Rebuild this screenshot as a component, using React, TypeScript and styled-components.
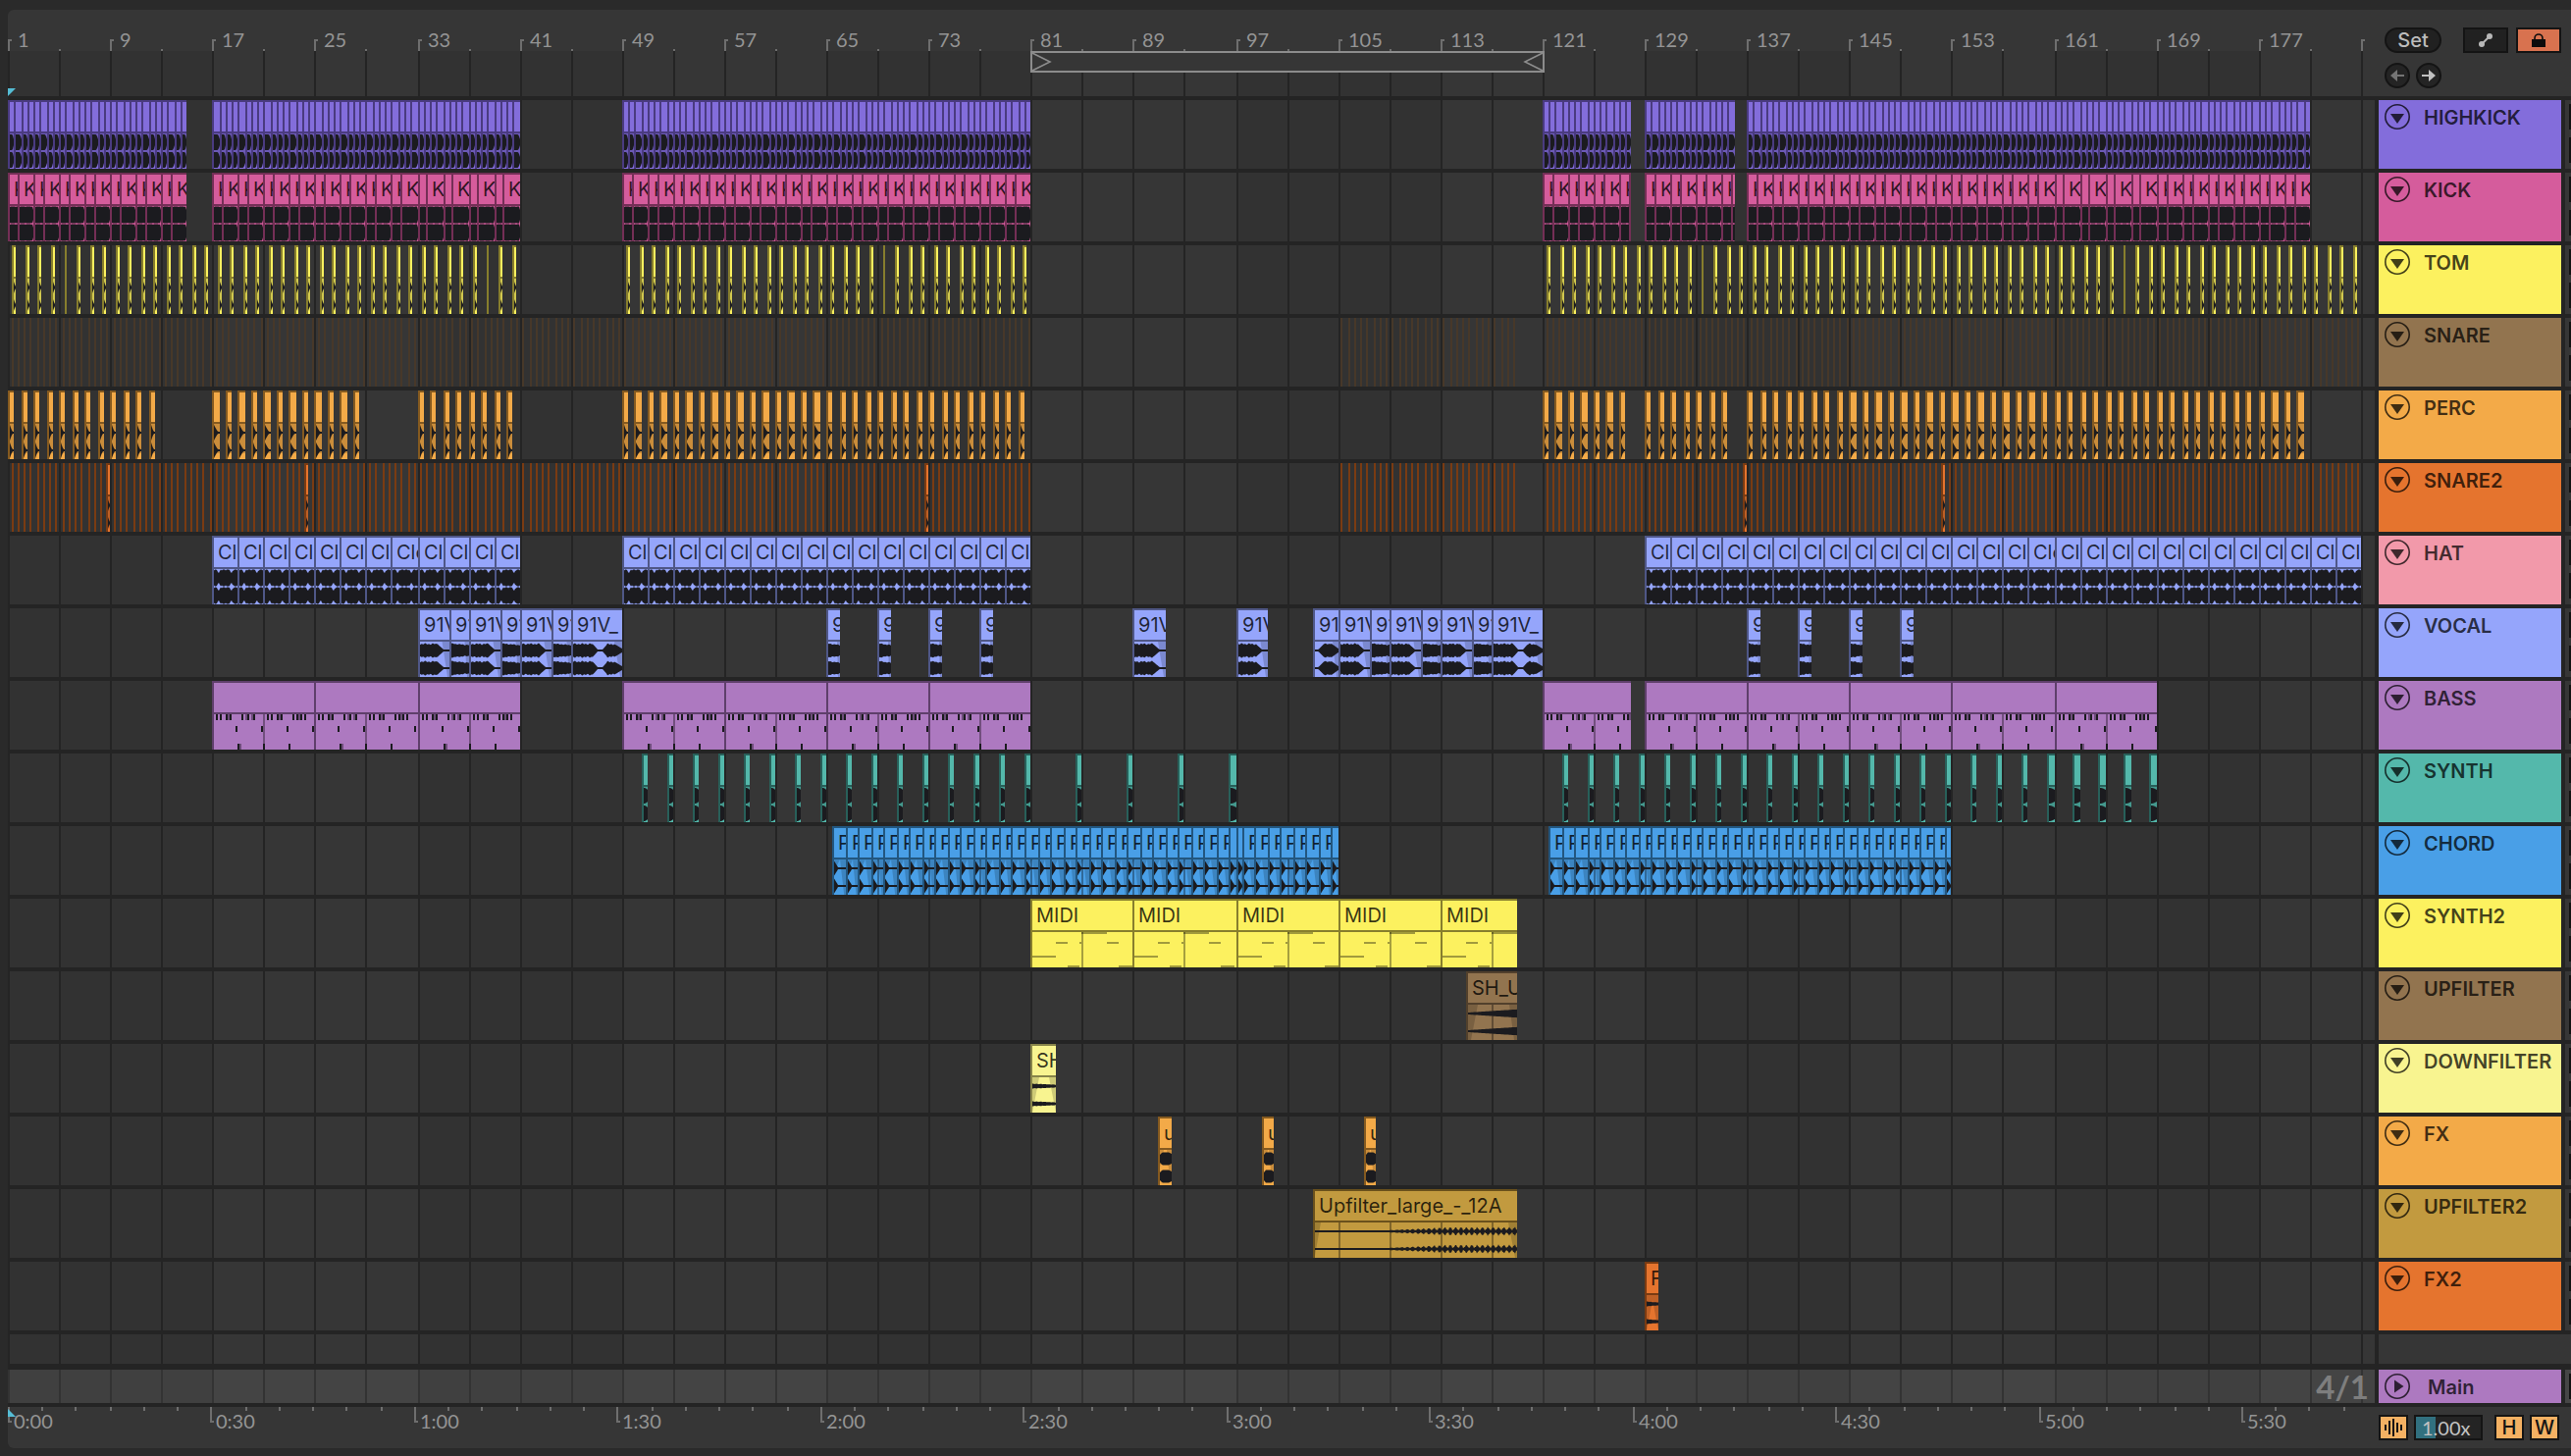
import React from "react";
import styled, { createGlobalStyle } from "styled-components";

/* ---------- time scale ---------- */

const UNITS_PER_BAR = 6.51565;
const barX = (bar: number) => 2 * Math.round(bar * UNITS_PER_BAR);
const secX = (sec: number) => 2 * Math.round(sec * 3.4485);
const LAST_BAR = 184;

/* ---------- palette ---------- */

const ink = "#1b1b1f";
const purple = { fill: "#836ddb", edge: "#4a3b80" };
const pink = { fill: "#d55c9c", edge: "#742f56" };
const yellow = { fill: "#fcf15f", edge: "#877e2d" };
const brown = { fill: "#92744f", edge: "#52402c" };
const umber = { fill: "#473829", edge: "#473829" };
const amber = { fill: "#f3aa48", edge: "#855a20" };
const orange = { fill: "#e5742e", edge: "#7a3b12" };
const blue = { fill: "#95a5fb", edge: "#4f5787" };
const violet = { fill: "#ad79c0", edge: "#5f3f6b" };
const teal = { fill: "#54b8ab", edge: "#28605a" };
const sky = { fill: "#499fe7", edge: "#22567f" };
const cream = { fill: "#f8f490", edge: "#87844a" };
const gold = { fill: "#c29a3f", edge: "#6a511c" };
const rose = { fill: "#f299aa", edge: "#85505b" };

type Paint = { fill: string; edge: string };
type Kind =
  | "highkick" | "kick" | "tom" | "perc" | "hat" | "vocal" | "bass"
  | "synth" | "chord" | "midi" | "rise" | "flat" | "burst" | "noise";
type ClipData = { from: number; to: number; label?: string };
type Track = { name: string; paint: Paint; clipPaint?: Paint; kind: Kind; clips: ClipData[] };

/* ---------- arrangement ---------- */

const range = (from: number, to: number, step: number) => {
  const out: number[] = [];
  for (let b = from; b < to; b += step) out.push(b);
  return out;
};

const tile = (from: number, to: number, step: number, label?: string): ClipData[] =>
  range(from, to, step).map((b) => ({ from: b, to: Math.min(b + step, to), label }));

const kicks = (from: number, to: number, split = 0.75): ClipData[] =>
  range(from, to, 2).flatMap((b) => [
    { from: b, to: Math.min(b + split, to), label: "K" },
    ...(b + split < to ? [{ from: b + split, to: Math.min(b + 2, to), label: "K" }] : []),
  ]);

const hits = (from: number, to: number, step: number, offset: number, length: number): ClipData[] =>
  range(from, to, step).map((b) => ({ from: b + offset, to: b + offset + length }));

const chain = (edges: number[], label: string): ClipData[] =>
  edges.slice(0, -1).map((b, i) => ({ from: b, to: edges[i + 1], label }));

const chords = [64.5, ...range(65.5, 96, 1), 96, ...range(96.5, 104, 1), 104];

const tracks: Track[] = [
  {
    name: "HIGHKICK", paint: purple, kind: "highkick",
    clips: [[0, 14], [16, 40], [48, 80], [120, 127], [128, 135], [136, 180]].flatMap(([a, b]) => tile(a, b, 0.5)),
  },
  {
    name: "KICK", paint: pink, kind: "kick",
    clips: [
      ...kicks(0, 14), ...kicks(16, 32), ...kicks(32, 40, 0.625), ...kicks(48, 80),
      ...kicks(120, 126.875), ...kicks(128, 135), ...kicks(136, 160),
      ...kicks(160, 168, 0.625), ...kicks(168, 180),
    ],
  },
  {
    name: "TOM", paint: yellow, kind: "tom",
    clips: [[0, 40], [48, 80], [120, 184]].flatMap(([a, b]) => hits(a, b, 1, 0.375, 0.302)),
  },
  {
    name: "SNARE", paint: brown, clipPaint: umber, kind: "tom",
    clips: [[0, 80], [104, 118], [120, 184]].flatMap(([a, b]) => hits(a, b, 0.5, 0.25, 0.1535)),
  },
  {
    name: "PERC", paint: amber, kind: "perc",
    clips: [[0, 12], [16, 28], [32, 40], [48, 80], [120, 127], [128, 135], [136, 180]]
      .flatMap(([a, b]) => hits(a, b, 1, 0, 0.5)),
  },
  {
    name: "SNARE2", paint: orange, kind: "tom",
    clips: [[0, 80], [104, 118], [120, 184]].flatMap(([a, b]) => hits(a, b, 0.5, 0.25, 0.1553)),
  },
  {
    name: "HAT", paint: rose, clipPaint: blue, kind: "hat",
    clips: [[16, 40], [48, 80], [128, 184]].flatMap(([a, b]) => tile(a, b, 2, "Clo")),
  },
  {
    name: "VOCAL", paint: blue, kind: "vocal",
    clips: [
      ...chain([32, 34.5, 36, 38.5, 40, 42.5, 44, 48], "91V_"),
      ...[64, 68, 72, 76, 136, 140, 144, 148].map((b) => ({ from: b, to: b + 1, label: "91V_" })),
      { from: 88, to: 90.5, label: "91V_" },
      { from: 96, to: 98.5, label: "91V_" },
      ...chain([102, 104, 106.5, 108, 110.5, 112, 114.5, 116, 120], "91V_"),
    ],
  },
  {
    name: "BASS", paint: violet, kind: "bass",
    clips: [[16, 40], [48, 80], [120, 127], [128, 168]].flatMap(([a, b]) => tile(a, b, 8)),
  },
  {
    name: "SYNTH", paint: teal, kind: "synth",
    clips: [...hits(48, 80, 2, 1.5, 0.5), ...hits(80, 96, 4, 3.5, 0.5), ...hits(120, 168, 2, 1.5, 0.5)],
  },
  {
    name: "CHORD", paint: sky, kind: "chord",
    clips: [...chain(chords, "P"), ...tile(120.5, 152, 1, "P")],
  },
  { name: "SYNTH2", paint: yellow, kind: "midi", clips: tile(80, 118, 8, "MIDI") },
  { name: "UPFILTER", paint: brown, kind: "rise", clips: [{ from: 114, to: 118, label: "SH_U" }] },
  { name: "DOWNFILTER", paint: cream, kind: "flat", clips: [{ from: 80, to: 82, label: "SH" }] },
  {
    name: "FX", paint: amber, kind: "burst",
    clips: [90, 98, 106].map((b) => ({ from: b, to: b + 1, label: "u" })),
  },
  { name: "UPFILTER2", paint: gold, kind: "noise", clips: [{ from: 102, to: 118, label: "Upfilter_large_-_12A" }] },
  { name: "FX2", paint: orange, kind: "flat", clips: [{ from: 128, to: 129, label: "F" }] },
];

/* ---------- clip contents ---------- */

const wobble = (x: number, seed: number) =>
  Math.sin(x * 1.7 + seed * 3.1) * 0.6 + Math.sin(x * 0.73 + seed * 1.3) * 0.4;

function level(kind: Kind, x: number, w: number, seed: number): number {
  const t = x / w;
  switch (kind) {
    case "highkick":
      return t < 0.55 ? 8 : 8 - 5 * Math.pow((t - 0.55) / 0.45, 2);
    case "kick":
      return t > 0.94 && w > 12 ? 5 : x % 6 < 1 ? 8 : 8.6;
    case "tom":
      return [6, 3, 1][Math.min(2, Math.floor(x))];
    case "perc":
      return Math.max(1, 8 * Math.pow(1 - t, 1.5) - 0.5 * t);
    case "hat": {
      const near = Math.min(Math.abs(t - 0.2), Math.abs(t - 0.74)) * w;
      return near < 2 ? 4.5 + near * 2 : x % 4 < 1 ? 7.6 : 8.5;
    }
    case "vocal": {
      const n = wobble(x, seed);
      if (w > 40) {
        if (t < 0.4) return 6.6 + n;
        if (t < 0.5) return 6.6 - (t - 0.4) * 55;
        if (t < 0.6) return 1;
        if (t < 0.7) return 1 + (t - 0.6) * 55;
        return t < 0.85 ? 6.4 + n : 6.4 - (t - 0.85) * 30;
      }
      if (seed === 102) return t < 0.15 ? 1 : t < 0.4 ? 1 + (t - 0.15) * 24 : t < 0.7 ? 6.8 + n * 0.6 : 7 - (t - 0.7) * 17;
      if (w > 21) return t < 0.6 ? 6.6 + n : t < 0.8 ? 6.4 - (t - 0.6) * 27 : 1;
      return 7 + n * 0.6 - t * 1.5;
    }
    case "synth":
      return 8 - 2 * t * t;
    case "chord":
      return Math.max(1, 7.5 - x * 1.6);
    case "rise":
      return 1 + 3.2 * t;
    case "flat":
      return 2.4 - t + wobble(x * 2, 1) * 0.4;
    case "burst":
      return t < 0.2 ? 4 + t * 12 : t > 0.75 ? 6.5 - (t - 0.75) * 6 : 6.5;
    case "noise": {
      const rise = Math.min(1, Math.max(0, (t - 0.35) / 0.3));
      return 1 + rise * (1.6 + 1.5 * Math.sin(x * 1.15) + 0.7 * Math.sin(x * 2.9));
    }
    default:
      return 0;
  }
}

function channel(kind: Kind, w: number, mid: number, seed: number): string {
  const top: string[] = [];
  const bottom: string[] = [];
  for (let x = 0; x <= w; x += 1) {
    const h = Math.min(8.6, Math.max(0.8, level(kind, x, w, seed)));
    top.push(`${x} ${(mid - h).toFixed(1)}`);
    bottom.unshift(`${x} ${(mid + h).toFixed(1)}`);
  }
  return `M${top.join("L")}L${bottom.join("L")}Z`;
}

const shades: Partial<Record<Kind, (w: number) => string>> = {
  highkick: (w) => `M0 0H${w}V30L0 20Z`,
  tom: (w) => `M0 0H${w}V34L0 24Z`,
  perc: (w) => `M0 0H${w}V30L0 30Z`,
  synth: (w) => `M0 0H${w}V30H0Z`,
  vocal: (w) => `M${Math.max(w - 8, w * 0.75)} 0H${w}V36H${w - 2}Z`,
  chord: (w) => `M0 0H${w}V36H${w * 0.85}L${w * 0.5} 0L2 8Z`,
  rise: (w) => `M0 0H10L3 36H0ZM${w - 8} 0H${w}V36H${w - 3}Z`,
  flat: (w) => `M0 0H7L2 26L0 36ZM${w - 7} 0H${w}V36Z`,
  burst: (w) => `M0 0H4L0 18ZM${w - 5} 0H${w}V30H${w - 2}Z`,
  noise: (w) => `M0 0H6L0 34ZM${w - 9} 0H${w}V36H${w - 2}Z`,
};

type Note = [x: number, y: number, w: number, h: number, dim?: boolean];

const bassPhrase: Note[] = [
  ...[4, 8, 14, 18, 30, 36, 42].map((x): Note => [x, 0, 2, 6]),
  ...[16, 34, 40].map((x): Note => [x, 0, 2, 6, true]),
  [24, 12, 2, 6], [50, 12, 2, 6], [26, 30, 2, 6], [0, 30, 2, 6], [28, 30, 2, 6, true],
];
const bassAnswer: Note[] = [
  ...[4, 8, 14, 18, 30, 34, 38, 42].map((x): Note => [x, 0, 2, 6]),
  ...[16, 36].map((x): Note => [x, 0, 2, 6, true]),
  [24, 12, 2, 6], [50, 12, 2, 6], [26, 30, 2, 6], [0, 30, 2, 6],
];
const midiPhrase: Note[] = [
  [0, 24, 24, 2, true], [24, 10, 12, 2, true], [48, 10, 2, 2, true], [36, 34, 12, 2, true],
  [50, 0, 26, 2, true], [76, 10, 12, 2, true], [88, 34, 14, 2, true],
];

function notesFor(clip: ClipData, kind: Kind): Note[] {
  if (kind === "midi") return midiPhrase;
  if (kind !== "bass") return [];
  return range(clip.from, clip.to, 4).flatMap((b, i) => {
    const dx = barX(b) - barX(clip.from) - 2;
    return (i % 2 ? bassAnswer : bassPhrase).map(([x, y, w, h, dim]): Note => [x + dx, y, w, h, dim]);
  });
}

function ClipDrawing({ clip, kind, width }: { clip: ClipData; kind: Kind; width: number }) {
  const shade = shades[kind];
  const lines = range(Math.ceil((clip.from + 0.1) / 4) * 4, clip.to - 0.1, 4)
    .map((b) => barX(b) - barX(clip.from) - 2);
  const isMidi = kind === "bass" || kind === "midi";
  return (
    <Drawing width={width} height={36} viewBox={`0 0 ${width} 36`} aria-hidden="true">
      {shade && <path d={shade(width)} fill="rgba(0,0,0,0.17)" />}
      {lines.map((x) => <rect key={x} x={x} y={0} width={2} height={36} fill="rgba(0,0,0,0.34)" />)}
      {isMidi
        ? notesFor(clip, kind).map(([x, y, w, h, dim], i) => (
            <rect key={i} x={x} y={y} width={w} height={h} fill={dim ? "rgba(0,0,0,0.36)" : ink} />
          ))
        : <path d={channel(kind, width, 9, clip.from) + channel(kind, width, 27, clip.from)} fill={ink} />}
    </Drawing>
  );
}

/* ---------- styles ---------- */

const Global = createGlobalStyle`
  *, *::before, *::after { box-sizing: border-box; }
  body {
    margin: 0;
    background: #2a2a2a;
    font-family: Inter, "Liberation Sans", sans-serif;
    font-size: 20px;
    line-height: 24px;
  }
  button, input { font: inherit; margin: 0; padding: 0; }
`;

const Page = styled.main`
  padding: 10px 0 8px 8px;
`;

const Frame = styled.div`
  border-radius: 6px 0 0 6px;
  background: #363636;
  overflow: hidden;
`;

const Row = styled.div`
  display: flex;
`;

const TimeColumn = styled.div`
  position: relative;
  flex: 1;
  min-width: 0;
  overflow: hidden;
`;

const SideColumn = styled.div`
  flex: none;
  width: 200px;
`;

const Ruler = styled.div`
  position: relative;
  height: 42px;
  font-family: Lato, "Liberation Sans", sans-serif;
  color: #949494;
`;

const BarMark = styled.span<{ $major?: boolean }>`
  position: absolute;
  bottom: 0;
  height: ${(p) => (p.$major ? 12 : 2)}px;
  border-left: 2px solid #6e6e6e;

  &::after {
    content: "";
    display: ${(p) => (p.$major ? "block" : "none")};
    width: 2px;
    height: 2px;
    background: #6e6e6e;
  }
`;

const BarLabel = styled.span`
  position: absolute;
  top: 18px;
  padding-left: 10px;
`;

const Scrub = styled.div`
  position: relative;
  height: 46px;
`;

const Loop = styled.div`
  position: absolute;
  top: 0;
  display: flex;
  justify-content: space-between;
  height: 22px;
  border: 2px solid #8c8c8c;
  background: #363636;
`;

const Playhead = styled.svg<{ $edge: "top" | "bottom" }>`
  position: absolute;
  left: 0;
  ${(p) => (p.$edge === "bottom" ? "bottom: 0;" : "top: 2px;")}
`;

const GridLayer = styled.div`
  position: absolute;
  inset: 0;
  display: flex;
`;

const GridCell = styled.span<{ $light: boolean }>`
  flex: none;
  border-left: 2px solid #242424;
  background: ${(p) => (p.$light ? "#363636" : "#323232")};

  &:last-child { flex: 1; }
`;

const Lanes = styled.div`
  position: relative;
  border-top: 4px solid #242424;
`;

const Lane = styled.section`
  position: relative;
  height: 74px;
  border-bottom: 4px solid #242424;
`;

const SpareLane = styled.div`
  height: 36px;
  border-bottom: 6px solid #242424;
`;

const MainLane = styled.div`
  display: flex;
  align-items: center;
  justify-content: flex-end;
  height: 38px;
  padding-right: 6px;
  border-bottom: 4px solid #242424;
  background: rgba(255, 255, 255, 0.07);
  color: #7e7e7e;
  font: 700 33px/34px Lato, "Liberation Sans", sans-serif;
`;

const Clip = styled.div<{ $paint: Paint }>`
  position: absolute;
  top: 0;
  height: 70px;
  overflow: hidden;
  border-left: 2px solid ${(p) => p.$paint.edge};
  border-top: 2px solid ${(p) => p.$paint.edge};
  background: ${(p) => p.$paint.fill};
`;

const ClipTitle = styled.div<{ $edge: string }>`
  height: 32px;
  padding-left: 4px;
  overflow: hidden;
  border-bottom: 2px solid ${(p) => p.$edge};
  line-height: 30px;
  color: rgba(0, 0, 0, 0.78);
  white-space: nowrap;
`;

const Drawing = styled.svg`
  display: block;
`;

const Controls = styled(SideColumn)`
  display: flex;
  flex-direction: column;
  gap: 10px;
  padding: 18px 10px 0;
`;

const ControlRow = styled.div`
  display: flex;
  gap: 6px;
`;

const PillButton = styled.button`
  width: 58px;
  height: 26px;
  margin-right: 16px;
  border: 2px solid #141414;
  border-radius: 13px;
  background: #212121;
  color: #bcbcbc;
  font-weight: 500;
  line-height: 22px;
`;

const ToggleButton = styled.button<{ $on?: boolean }>`
  display: grid;
  place-items: center;
  width: 46px;
  height: 26px;
  margin-right: 2px;
  border: 2px solid #141414;
  background: ${(p) => (p.$on ? "#d8724f" : "#212121")};

  &:last-child { margin-right: 0; }
`;

const RoundButton = styled.button`
  display: grid;
  place-items: center;
  width: 26px;
  height: 26px;
  border: 2px solid #141414;
  border-radius: 50%;
  background: #242424;
`;

const Heads = styled(SideColumn)`
  border-top: 4px solid #242424;
  border-left: 4px solid #242424;
`;

const HeadRow = styled.div<{ $gap: number }>`
  display: flex;
  border-bottom: ${(p) => p.$gap}px solid #242424;
`;

const Head = styled.header<{ $color: string; $main?: boolean }>`
  display: flex;
  gap: ${(p) => (p.$main ? 18 : 14)}px;
  width: 186px;
  height: ${(p) => (p.$main ? 34 : 70)}px;
  padding: 4px 0 0 6px;
  background: ${(p) => p.$color};
  color: rgba(0, 0, 0, 0.74);
  font-weight: 600;
  line-height: 28px;
  white-space: nowrap;
`;

const FoldButton = styled.button`
  display: block;
  flex: none;
  width: 26px;
  height: 26px;
  border: 0;
  background: none;
  color: inherit;
`;

const FoldDrawing = styled.svg`
  display: block;
`;

const MixerEdge = styled.div<{ $main?: boolean }>`
  display: flex;
  flex-direction: column;
  align-items: flex-end;
  gap: 8px;
  width: 10px;
  padding-top: 4px;
  border-left: 4px solid #242424;
  background: ${(p) => (p.$main ? "#464646" : "#363636")};
`;

const MixerBox = styled.span`
  width: 2px;
  height: 26px;
  background: #121212;
`;

const SpareHead = styled.div`
  height: 36px;
  border-bottom: 6px solid #242424;
`;

const TimeMark = styled.span<{ $major?: boolean }>`
  position: absolute;
  top: 0;
  display: flex;
  align-items: flex-end;
  height: ${(p) => (p.$major ? 16 : 4)}px;
  border-left: 2px solid #6e6e6e;

  &::after {
    content: "";
    display: ${(p) => (p.$major ? "block" : "none")};
    width: 2px;
    height: 2px;
    background: #6e6e6e;
  }
`;

const TimeLabel = styled.span`
  position: absolute;
  top: 2px;
  padding-left: 6px;
`;

const FooterControls = styled(SideColumn)`
  display: flex;
  gap: 6px;
  padding: 8px 0 0 4px;
`;

const SquareButton = styled.button`
  display: grid;
  place-items: center;
  width: 30px;
  height: 26px;
  border: 2px solid #141414;
  background: #f4b163;
  color: #141414;
  font-weight: 500;
  line-height: 22px;
`;

const ZoomInput = styled.input`
  width: 70px;
  height: 26px;
  margin-right: 6px;
  padding-left: 6px;
  border: 2px solid #141414;
  border-radius: 0;
  background: linear-gradient(90deg, #31707f 20px, #242424 20px);
  color: #c2c2c2;
  font-family: Lato, "Liberation Sans", sans-serif;
`;

/* ---------- parts ---------- */

const gridBars = range(0, LAST_BAR + 1, 4);

function Grid() {
  return (
    <GridLayer aria-hidden="true">
      {gridBars.map((b) => (
        <GridCell
          key={b}
          $light={Math.floor(b / 16) % 2 === 1}
          style={{ width: barX(b + 4) - barX(b) }}
        />
      ))}
    </GridLayer>
  );
}

function FoldIcon({ right }: { right?: boolean }) {
  return (
    <FoldDrawing width="26" height="26" viewBox="0 0 26 26" aria-hidden="true">
      <circle cx="13" cy="13" r="12.2" fill="none" stroke="currentColor" strokeWidth="1.6" />
      <path d={right ? "M10 6.5L19.5 13L10 19.5Z" : "M6 10H20L13 20Z"} fill="currentColor" />
    </FoldDrawing>
  );
}

function ArrowIcon({ color, flip }: { color: string; flip?: boolean }) {
  return (
    <svg width="14" height="14" viewBox="0 0 14 14" aria-hidden="true">
      <path
        d={flip ? "M0 6H7V1L14 7L7 13V8H0Z" : "M14 6H7V1L0 7L7 13V8H14Z"}
        fill={color}
      />
    </svg>
  );
}

function TrackLane({ track }: { track: Track }) {
  const paint = track.clipPaint ?? track.paint;
  return (
    <Lane aria-label={track.name}>
      {track.clips.map((clip) => {
        const left = barX(clip.from);
        const width = barX(clip.to) - left;
        return (
          <Clip key={clip.from} $paint={paint} style={{ left, width }}>
            {width > 2 && (
              <>
                <ClipTitle $edge={paint.edge}>{width >= 10 ? clip.label : null}</ClipTitle>
                <ClipDrawing clip={clip} kind={track.kind} width={width - 2} />
              </>
            )}
          </Clip>
        );
      })}
    </Lane>
  );
}

const clock = (sec: number) => `${Math.floor(sec / 60)}:${String(sec % 60).padStart(2, "0")}`;

export default function App() {
  return (
    <Page>
      <Global />
      <Frame>
        <Row>
          <TimeColumn>
            <Ruler>
              {gridBars.map((b) => (
                <BarMark key={b} $major={b % 8 === 0} style={{ left: barX(b) }} />
              ))}
              {range(0, LAST_BAR, 8).map((b) => (
                <BarLabel key={b} style={{ left: barX(b) }}>{b + 1}</BarLabel>
              ))}
            </Ruler>
            <Scrub>
              <Grid />
              <Loop style={{ left: barX(80), width: barX(120) - barX(80) + 2 }}>
                <svg width="20" height="18" viewBox="0 0 20 18" aria-hidden="true">
                  <path d="M0 0L18 9L0 18" fill="none" stroke="#8c8c8c" strokeWidth="1.6" />
                </svg>
                <svg width="20" height="18" viewBox="0 0 20 18" aria-hidden="true">
                  <path d="M20 0L2 9L20 18" fill="none" stroke="#8c8c8c" strokeWidth="1.6" />
                </svg>
              </Loop>
              <Playhead $edge="bottom" width="8" height="8" viewBox="0 0 8 8" aria-hidden="true">
                <path d="M0 0H8L0 8Z" fill="#55bdd5" />
              </Playhead>
            </Scrub>
          </TimeColumn>
          <Controls>
            <ControlRow>
              <PillButton type="button">Set</PillButton>
              <ToggleButton type="button" aria-label="Automation mode">
                <svg width="16" height="16" viewBox="0 0 16 16" aria-hidden="true">
                  <path d="M4 12L12 4" stroke="#b8b8b8" strokeWidth="2" />
                  <circle cx="4" cy="12" r="3" fill="#b8b8b8" />
                  <circle cx="12" cy="4" r="3" fill="#b8b8b8" />
                </svg>
              </ToggleButton>
              <ToggleButton type="button" aria-label="Lock envelopes" $on>
                <svg width="14" height="14" viewBox="0 0 14 14" aria-hidden="true">
                  <path d="M3 7V5a4 4 0 0 1 8 0V7" fill="none" stroke="#0c0c0c" strokeWidth="1.6" />
                  <rect x="0" y="6" width="14" height="8" fill="#0c0c0c" />
                </svg>
              </ToggleButton>
            </ControlRow>
            <ControlRow>
              <RoundButton type="button" aria-label="Previous locator"><ArrowIcon color="#757575" /></RoundButton>
              <RoundButton type="button" aria-label="Next locator"><ArrowIcon color="#c0c0c0" flip /></RoundButton>
            </ControlRow>
          </Controls>
        </Row>

        <Row>
          <TimeColumn>
            <Grid />
            <Lanes>
              {tracks.map((track) => <TrackLane key={track.name} track={track} />)}
              <SpareLane />
              <MainLane>4/1</MainLane>
            </Lanes>
          </TimeColumn>
          <Heads>
            {tracks.map((track) => (
              <HeadRow key={track.name} $gap={4}>
                <Head $color={track.paint.fill}>
                  <FoldButton type="button" aria-label={`Fold ${track.name}`}><FoldIcon /></FoldButton>
                  <span>{track.name}</span>
                </Head>
                <MixerEdge><MixerBox /><MixerBox /></MixerEdge>
              </HeadRow>
            ))}
            <SpareHead />
            <HeadRow $gap={4}>
              <Head $color={violet.fill} $main>
                <FoldButton type="button" aria-label="Unfold Main"><FoldIcon right /></FoldButton>
                <span>Main</span>
              </Head>
              <MixerEdge $main><MixerBox /></MixerEdge>
            </HeadRow>
          </Heads>
        </Row>

        <Row>
          <TimeColumn>
            <Ruler>
              {range(0, 346, 5).map((s) => (
                <TimeMark key={s} $major={s % 30 === 0} style={{ left: secX(s) }} />
              ))}
              {range(0, 346, 30).map((s) => (
                <TimeLabel key={s} style={{ left: secX(s) }}>{clock(s)}</TimeLabel>
              ))}
              <Playhead $edge="top" width="8" height="8" viewBox="0 0 8 8" aria-hidden="true">
                <path d="M0 0L8 8H0Z" fill="#55bdd5" />
              </Playhead>
            </Ruler>
          </TimeColumn>
          <FooterControls>
            <SquareButton type="button" aria-label="Waveform zoom">
              <svg width="20" height="20" viewBox="0 0 20 20" aria-hidden="true">
                <path d="M2 7V13M6 3V17M10 1V19M14 5V15M18 7V13" stroke="#141414" strokeWidth="2" />
              </svg>
            </SquareButton>
            <ZoomInput aria-label="Vertical zoom" defaultValue="1.00x" />
            <SquareButton type="button">H</SquareButton>
            <SquareButton type="button">W</SquareButton>
          </FooterControls>
        </Row>
      </Frame>
    </Page>
  );
}
